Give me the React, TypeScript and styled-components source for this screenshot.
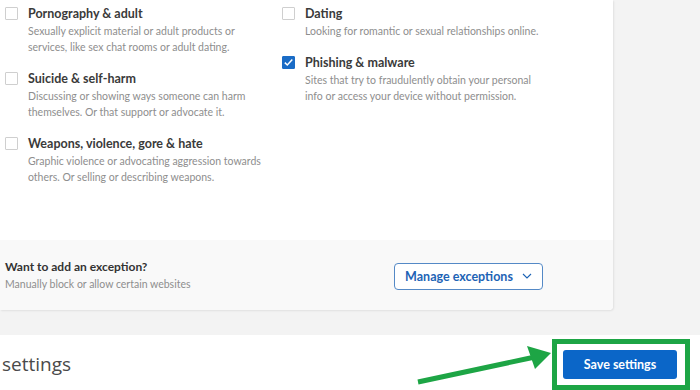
import React, { FC } from 'react'
import styled, { createGlobalStyle } from 'styled-components'

const GlobalStyle = createGlobalStyle`
	html, body {
		margin: 0;
		padding: 0;
		background: #f3f3f3;
		font-family: Lato, 'Open Sans', sans-serif;
	}
`

type Category = {
	title: string
	text: string
	checked?: boolean
}

// line breaks kept as in the design
const leftCategories: Category[] = [
	{
		title: 'Pornography & adult',
		text: 'Sexually explicit material or adult products or\nservices, like sex chat rooms or adult dating.',
	},
	{
		title: 'Suicide & self-harm',
		text: 'Discussing or showing ways someone can harm\nthemselves. Or that support or advocate it.',
	},
	{
		title: 'Weapons, violence, gore & hate',
		text: 'Graphic violence or advocating aggression towards\nothers. Or selling or describing weapons.',
	},
]

const rightCategories: Category[] = [
	{
		title: 'Dating',
		text: 'Looking for romantic or sexual relationships online.',
	},
	{
		title: 'Phishing & malware',
		text: 'Sites that try to fraudulently obtain your personal\ninfo or access your device without permission.',
		checked: true,
	},
]

const CategoryRow: FC<Category> = ({ title, text, checked }) => (
	<Row>
		<Box checked={!!checked}>
			{checked && (
				<svg width='11' height='11' viewBox='0 0 11 11'>
					<path d='M1.8 5.6 L4.3 8 L9.3 2.6' fill='none' stroke='#fff' strokeWidth='1.5' />
				</svg>
			)}
		</Box>
		<div>
			<Title>{title}</Title>
			<Desc>{text}</Desc>
		</div>
	</Row>
)

const App: FC = () => {
	return (
		<Page>
			<GlobalStyle />
			<Card>
				<Columns>
					<Column>
						{leftCategories.map((c) => (
							<CategoryRow key={c.title} {...c} />
						))}
					</Column>
					<Column>
						{rightCategories.map((c) => (
							<CategoryRow key={c.title} {...c} />
						))}
					</Column>
				</Columns>
				<Exception>
					<div>
						<ExTitle>{'Want to add an exception?'}</ExTitle>
						<ExText>{'Manually block or allow certain websites'}</ExText>
					</div>
					<OutlineButton>
						{'Manage exceptions'}
						<svg width='10' height='6' viewBox='0 0 10 6'>
							<path d='M1 1 L5 5 L9 1' fill='none' stroke='#1d63b5' strokeWidth='1.1' />
						</svg>
					</OutlineButton>
				</Exception>
			</Card>
			<BottomBar>
				<Heading>{'settings'}</Heading>
				<Highlight>
					<SaveButton>{'Save settings'}</SaveButton>
				</Highlight>
				<Arrow width='150' height='50' viewBox='0 0 150 50'>
					<line x1='3' y1='40' x2='120' y2='15' stroke='#1da545' strokeWidth='5' />
					<polygon points='136,11 112,4 120,27' fill='#1da545' />
				</Arrow>
			</BottomBar>
		</Page>
	)
}

const Page = styled.div`
	width: 700px;
	height: 390px;
	overflow: hidden;
	background: #f3f3f3;
`

const Card = styled.div`
	width: 613px;
	background: #fff;
	border-radius: 0 0 4px 0;
	box-shadow: 1px 1px 2px rgba(0, 0, 0, 0.08);
	overflow: hidden;
`

const Columns = styled.div`
	display: grid;
	grid-template-columns: 277px 1fr;
	height: 235px;
	padding: 5px 0 0 5px;
`

const Column = styled.div`
	display: flex;
	flex-direction: column;
`

const Row = styled.div`
	display: flex;
	gap: 10px;
	margin-bottom: 15px;
`

const Box = styled.div<{ checked: boolean }>`
	flex: none;
	width: 13px;
	height: 13px;
	margin-top: 2px;
	box-sizing: border-box;
	border: 1px solid ${({ checked }) => (checked ? '#1a6cc6' : '#cfcfcf')};
	background: ${({ checked }) => (checked ? '#1a6cc6' : '#fff')};
	border-radius: 1px;
	display: flex;
	align-items: center;
	justify-content: center;
`

const Title = styled.div`
	font-size: 12.5px;
	font-weight: 700;
	line-height: 18px;
	color: #3a3a3a;
`

const Desc = styled.div`
	font-size: 10.5px;
	line-height: 16px;
	color: #8e8e8e;
	white-space: pre-line;
`

const Exception = styled.div`
	display: flex;
	align-items: center;
	justify-content: space-between;
	height: 70px;
	padding: 0 70px 0 5px;
	background: #f9f9f9;
`

const ExTitle = styled.div`
	font-size: 12px;
	font-weight: 700;
	line-height: 18px;
	color: #333;
`

const ExText = styled.div`
	font-size: 10.5px;
	line-height: 16px;
	color: #8e8e8e;
`

const OutlineButton = styled.button`
	display: flex;
	align-items: center;
	justify-content: center;
	gap: 9px;
	width: 149px;
	height: 27px;
	margin-top: 2px;
	border: 1px solid #5489c6;
	border-radius: 4px;
	background: #fff;
	color: #1d63b5;
	font-family: Lato, 'Open Sans', sans-serif;
	font-size: 12.5px;
	font-weight: 700;
`

const BottomBar = styled.div`
	position: relative;
	display: flex;
	align-items: center;
	justify-content: space-between;
	margin-top: 25px;
	height: 55px;
	padding: 0 10px 0 2px;
	background: #fff;
`

const Heading = styled.div`
	margin-top: 2px;
	font-family: 'Open Sans', sans-serif;
	font-size: 19px;
	color: #4a4a4a;
`

const Highlight = styled.div`
	margin-top: 3px;
	padding: 6px 8px 6px 6px;
	border: 5px solid #1da545;
`

const SaveButton = styled.button`
	display: block;
	width: 114px;
	height: 29px;
	border: none;
	border-radius: 3px;
	background: #0b66c8;
	color: #fff;
	font-family: Lato, 'Open Sans', sans-serif;
	font-size: 12.5px;
	font-weight: 700;
`

const Arrow = styled.svg`
	position: absolute;
	left: 415px;
	top: 7px;
`

export default App
